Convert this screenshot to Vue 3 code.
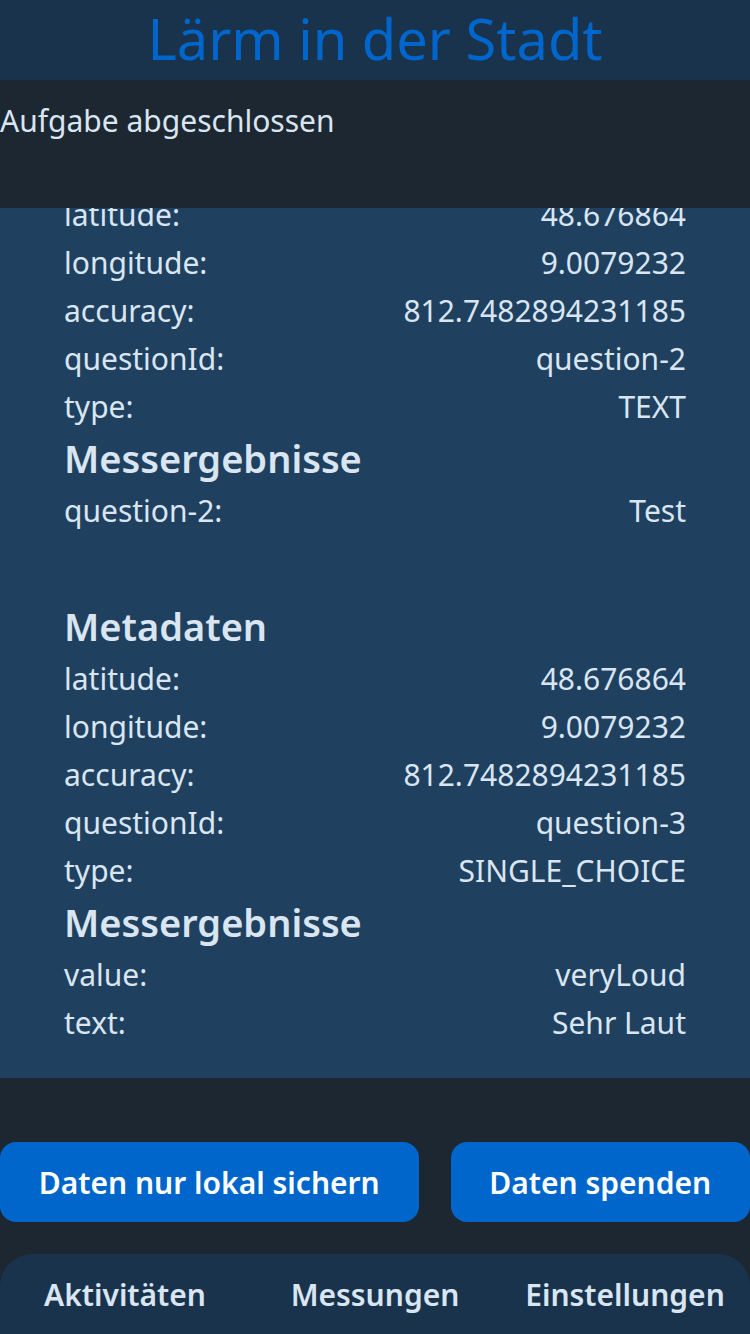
<script setup>
const coords = [
  ['latitude:', '48.676864'],
  ['longitude:', '9.0079232'],
  ['accuracy:', '812.7482894231185'],
]
const records = [
  {
    id: 2,
    meta: [...coords, ['questionId:', 'question-2'], ['type:', 'TEXT']],
    results: [['question-2:', 'Test']],
  },
  {
    id: 3,
    title: 'Metadaten',
    meta: [...coords, ['questionId:', 'question-3'], ['type:', 'SINGLE_CHOICE']],
    results: [['value:', 'veryLoud'], ['text:', 'Sehr Laut']],
  },
]
const tabs = ['Aktivitäten', 'Messungen', 'Einstellungen']
</script>

<template>
  <div class="app">
    <header class="top"><h1>Lärm in der Stadt</h1></header>
    <p class="status">Aufgabe abgeschlossen</p>
    <main class="results">
      <section v-for="r in records" :key="r.id" class="record">
        <h2 v-if="r.title">{{ r.title }}</h2>
        <dl>
          <div v-for="[k, v] in r.meta" :key="k" class="row"><dt>{{ k }}</dt><dd>{{ v }}</dd></div>
        </dl>
        <h2>Messergebnisse</h2>
        <dl>
          <div v-for="[k, v] in r.results" :key="k" class="row"><dt>{{ k }}</dt><dd>{{ v }}</dd></div>
        </dl>
      </section>
    </main>
    <div class="actions">
      <button type="button">Daten nur lokal sichern</button>
      <button type="button">Daten spenden</button>
    </div>
    <nav class="tabs">
      <a v-for="t in tabs" :key="t" href="#">{{ t }}</a>
    </nav>
  </div>
</template>

<style>
body {
  background: #1d2731;
}
</style>

<style scoped>
.app {
  display: flex;
  flex-direction: column;
  height: 100vh;
  background: #1d2731;
  color: #d9e6f2;
  font-family: "Noto Sans", sans-serif;
  font-size: 30px;
  line-height: 46px;
}
.top {
  background: #19334d;
  text-align: center;
}
h1, h2, p, dl, dd {
  margin: 0;
}
h1 {
  padding-bottom: 4px;
  color: #0066cc;
  font-size: 56px;
  font-weight: 400;
  line-height: 76px;
}
.status {
  padding: 18px 0 64px;
}
.results {
  flex: 1;
  display: flex;
  flex-direction: column;
  justify-content: flex-end;
  gap: 64px;
  min-height: 0;
  padding: 0 64px 32px;
  overflow: hidden;
  background: #204060;
}
h2 {
  font-size: 38px;
  font-weight: 600;
  line-height: 56px;
}
.row {
  display: flex;
  justify-content: space-between;
  padding-top: 2px;
}
.actions {
  display: flex;
  gap: 32px;
  padding: 64px 0 32px;
}
button {
  flex: 1 1 auto;
  padding: 18px 32px 16px;
  border: 0;
  border-radius: 16px;
  background: #0066cc;
  color: #fff;
  font: inherit;
  font-weight: 600;
  white-space: nowrap;
}
.tabs {
  display: grid;
  grid-template-columns: repeat(3, 1fr);
  border-radius: 32px 32px 0 0;
  background: #19334d;
}
.tabs a {
  padding: 18px 0 16px;
  color: inherit;
  font-weight: 600;
  text-align: center;
  text-decoration: none;
}
</style>
